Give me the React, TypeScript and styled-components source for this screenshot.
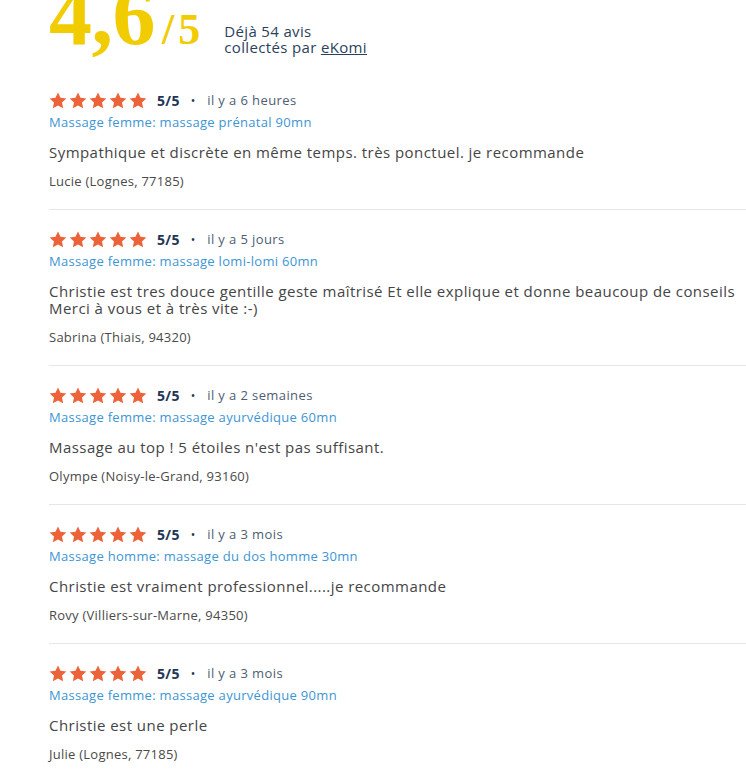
import React from 'react';
import styled, { createGlobalStyle } from 'styled-components';

interface Review {
  rating: number;
  when: string;
  service: string;
  text: string;
  author: string;
}

const reviews: Review[] = [
  {
    rating: 5,
    when: 'il y a 6 heures',
    service: 'Massage femme: massage prénatal 90mn',
    text: 'Sympathique et discrète en même temps. très ponctuel. je recommande',
    author: 'Lucie (Lognes, 77185)'
  },
  {
    rating: 5,
    when: 'il y a 5 jours',
    service: 'Massage femme: massage lomi-lomi 60mn',
    text: 'Christie est tres douce gentille geste maîtrisé Et elle explique et donne beaucoup de conseils Merci à vous et à très vite :-)',
    author: 'Sabrina (Thiais, 94320)'
  },
  {
    rating: 5,
    when: 'il y a 2 semaines',
    service: 'Massage femme: massage ayurvédique 60mn',
    text: "Massage au top ! 5 étoiles n'est pas suffisant.",
    author: 'Olympe (Noisy-le-Grand, 93160)'
  },
  {
    rating: 5,
    when: 'il y a 3 mois',
    service: 'Massage homme: massage du dos homme 30mn',
    text: 'Christie est vraiment professionnel.....je recommande',
    author: 'Rovy (Villiers-sur-Marne, 94350)'
  },
  {
    rating: 5,
    when: 'il y a 3 mois',
    service: 'Massage femme: massage ayurvédique 90mn',
    text: 'Christie est une perle',
    author: 'Julie (Lognes, 77185)'
  }
];

const GlobalStyle = createGlobalStyle`
  html, body {
    margin: 0;
    background: #fff;
    overflow: hidden;
  }
  body {
    font-family: 'Open Sans', 'DejaVu Sans', sans-serif;
  }
`;

const Page = styled.div`
  padding-left: 49px;
  width: 697px;
`;

// the page is scrolled a little, so the big score is cut at the top
const Summary = styled.div`
  display: flex;
  align-items: baseline;
  margin-top: -28px;
  padding-bottom: 13px;
`;

const Score = styled.span`
  font-family: 'Liberation Serif', serif;
  font-weight: bold;
  font-size: 86px;
  line-height: 1;
  color: #f1cc00;
  letter-spacing: -0.5px;
`;

const OutOf = styled.span`
  font-family: 'Liberation Serif', serif;
  font-weight: bold;
  font-size: 44px;
  line-height: 1;
  color: #f1cc00;
  letter-spacing: 4px;
  margin-left: 7px;
`;

const Collected = styled.div`
  align-self: flex-end;
  margin-left: 20px;
  margin-bottom: 3px;
  font-size: 15px;
  line-height: 16px;
  letter-spacing: 0.35px;
  color: #2b3f5c;

  a {
    color: #2b3f5c;
    text-decoration: underline;
  }
`;

const Item = styled.div`
  padding: 19px 0 20px;
  border-bottom: 1px solid #e6e6e6;

  &:last-child {
    border-bottom: none;
  }
`;

const Head = styled.div`
  display: flex;
  align-items: center;
  height: 20px;
`;

const Stars = styled.div`
  display: flex;
  gap: 2px;
`;

const Rating = styled.span`
  margin-left: 10px;
  font-size: 14px;
  font-weight: 700;
  letter-spacing: 0.3px;
  color: #1f3656;
`;

const Dot = styled.span`
  margin: 0 12px 0 11px;
  font-size: 12px;
  color: #1f3656;
`;

const When = styled.span`
  font-size: 13px;
  letter-spacing: 0.4px;
  color: #4d5d72;
`;

const Service = styled.div`
  margin-top: 3px;
  font-size: 13px;
  line-height: 18px;
  letter-spacing: 0.3px;
  color: #3d95d4;
`;

const Text = styled.p`
  margin: 13px 0 0;
  font-size: 15px;
  line-height: 17px;
  letter-spacing: 0.45px;
  color: #454545;
`;

const Author = styled.div`
  margin-top: 12px;
  font-size: 13px;
  line-height: 16px;
  letter-spacing: 0.25px;
  color: #4a4a4a;
`;

const Star = () => (
  <svg width='18' height='17' viewBox='0 0 24 23'>
    <path
      d='M12 0.6l3.4 7.3 7.9 0.9-5.9 5.4 1.6 7.9L12 18.1l-7 4 1.6-7.9L0.7 8.8l7.9-0.9z'
      fill='#ec6339'
    />
  </svg>
);

export default function App() {
  return (
    <Page>
      <GlobalStyle />
      <Summary>
        <Score>4,6</Score>
        <OutOf>/5</OutOf>
        <Collected>
          Déjà 54 avis
          <br />
          collectés par <a href='#'>eKomi</a>
        </Collected>
      </Summary>
      <div>
        {reviews.map((r, i) => (
          <Item key={i}>
            <Head>
              <Stars>
                {Array.from({ length: r.rating }).map((_, k) => (
                  <Star key={k} />
                ))}
              </Stars>
              <Rating>{r.rating}/5</Rating>
              <Dot>•</Dot>
              <When>{r.when}</When>
            </Head>
            <Service>{r.service}</Service>
            <Text>{r.text}</Text>
            <Author>{r.author}</Author>
          </Item>
        ))}
      </div>
    </Page>
  );
}
